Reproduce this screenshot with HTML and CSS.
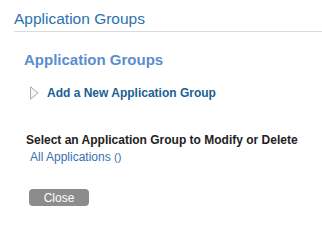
FILE: index.html
```html
<!DOCTYPE html>
<html lang="en">
<head>
    <meta charset="UTF-8">
    <title>Application Groups</title>
    <link rel="stylesheet" href="styles.css">
</head>
<body>
    <div class="dialog">
        <div class="dialog-title">Application Groups</div>
        <div class="dialog-body">
            <h2>Application Groups</h2>

            <a class="add-link" href="#">
                <svg class="arrow" width="9" height="14" viewBox="0 0 9 14">
                    <path d="M0.5 0.8 L8 7 L0.5 13.2 Z" fill="#f7f7f7" stroke="#a8a8a8" stroke-width="1"/>
                </svg>
                Add a New Application Group
            </a>

            <div class="select-group">
                <div class="select-label">Select an Application Group to Modify or Delete</div>
                <a class="group-item" href="#">All Applications <span class="count">()</span></a>
            </div>

            <button class="close-btn">Close</button>
        </div>
    </div>
</body>
</html>
```

FILE: styles.css
```css
body {
    font-family: Arial, "Liberation Sans", sans-serif;
    margin: 0;
    background: #fff;
}
.dialog {
    padding: 10px 0 0 14px;
}
.dialog-title {
    font-size: 15.5px;
    color: #2a72b0;
    padding-bottom: 3px;
    border-bottom: 1px solid #dcdcdc;
}
.dialog-body {
    padding: 19px 0 0 10px;
}
h2 {
    margin: 0;
    font-size: 15px;
    font-weight: bold;
    color: #5b8dcf;
}
.add-link {
    display: flex;
    align-items: center;
    gap: 8px;
    margin: 18px 0 0 6px;
    font-size: 12px;
    font-weight: bold;
    color: #1c5f94;
    text-decoration: none;
}
.select-group {
    margin-top: 33px;
}
.select-label {
    font-size: 12px;
    font-weight: bold;
    color: #222;
    margin-left: 2px;
}
.group-item {
    display: block;
    margin: 3px 0 0 6px;
    font-size: 12px;
    color: #3a6fb0;
    text-decoration: none;
}
.count {
    font-size: 11px;
}
.close-btn {
    margin: 25px 0 0 5px;
    width: 60px;
    height: 17px;
    padding: 0;
    border: none;
    border-radius: 4px;
    background: #8c8c8c;
    color: #fff;
    font-family: Arial, "Liberation Sans", sans-serif;
    font-size: 12px;
}
```
